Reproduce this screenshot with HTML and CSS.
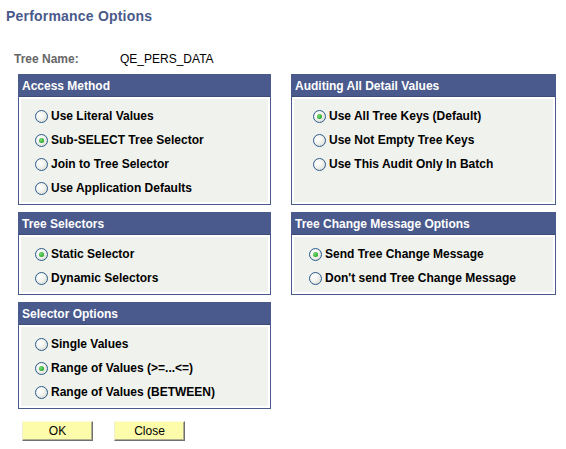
FILE: index.html
```html
<!DOCTYPE html>
<html>
<head>
<meta charset="utf-8">
<link rel="stylesheet" href="styles.css">
</head>
<body>
<div class="page">
  <h1 class="title">Performance Options</h1>
  <div class="treename"><span class="tn-label">Tree Name:</span><span class="tn-value">QE_PERS_DATA</span></div>
  <div class="grid">
    <div class="box">
      <div class="box-head">Access Method</div>
      <div class="box-body"><div class="box-inner ind-left">
        <div class="opt"><span class="radio"></span>Use Literal Values</div>
        <div class="opt"><span class="radio on"></span>Sub-SELECT Tree Selector</div>
        <div class="opt"><span class="radio"></span>Join to Tree Selector</div>
        <div class="opt"><span class="radio"></span>Use Application Defaults</div>
      </div></div>
    </div>
    <div class="box">
      <div class="box-head">Auditing All Detail Values</div>
      <div class="box-body"><div class="box-inner ind-audit">
        <div class="opt"><span class="radio on"></span>Use All Tree Keys (Default)</div>
        <div class="opt"><span class="radio"></span>Use Not Empty Tree Keys</div>
        <div class="opt"><span class="radio"></span>Use This Audit Only In Batch</div>
      </div></div>
    </div>
    <div class="box">
      <div class="box-head">Tree Selectors</div>
      <div class="box-body"><div class="box-inner ind-left">
        <div class="opt"><span class="radio on"></span>Static Selector</div>
        <div class="opt"><span class="radio"></span>Dynamic Selectors</div>
      </div></div>
    </div>
    <div class="box">
      <div class="box-head">Tree Change Message Options</div>
      <div class="box-body"><div class="box-inner ind-msg">
        <div class="opt"><span class="radio on"></span>Send Tree Change Message</div>
        <div class="opt"><span class="radio"></span>Don't send Tree Change Message</div>
      </div></div>
    </div>
    <div class="box">
      <div class="box-head">Selector Options</div>
      <div class="box-body"><div class="box-inner ind-left">
        <div class="opt"><span class="radio"></span>Single Values</div>
        <div class="opt"><span class="radio on"></span>Range of Values (&gt;=...&lt;=)</div>
        <div class="opt"><span class="radio"></span>Range of Values (BETWEEN)</div>
      </div></div>
    </div>
  </div>
  <div class="buttons">
    <button class="btn">OK</button>
    <button class="btn">Close</button>
  </div>
</div>
</body>
</html>
```
FILE: styles.css
```css
html, body {
  margin: 0;
  padding: 0;
  background: #ffffff;
}
body {
  font-family: "Liberation Sans", Arial, sans-serif;
  color: #000;
}
.page {
  padding-top: 8px;
}
.title {
  margin: 0 0 0 6px;
  font-size: 14px;
  line-height: 17px;
  font-weight: bold;
  color: #4a5a8c;
  letter-spacing: 0.2px;
}
.treename {
  margin-top: 27px;
  padding-left: 14px;
  height: 14px;
  line-height: 15px;
  font-size: 12px;
  display: flex;
}
.tn-label {
  width: 106px;
  font-weight: bold;
  color: #666666;
}
.tn-value {
  color: #000;
}
.grid {
  margin: 8px 0 0 18px;
  display: grid;
  grid-template-columns: 253px 265px;
  column-gap: 20px;
  row-gap: 7px;
  align-items: stretch;
}
.box {
  border: 1px solid #4a5a8a;
  display: flex;
  flex-direction: column;
}
.box-head {
  height: 20px;
  padding-top: 1px;
  line-height: 21px;
  background: #4a5a8c;
  border-bottom: 1px solid #3e4c7c;
  color: #ffffff;
  font-weight: bold;
  font-size: 12px;
  padding-left: 3px;
}
.box-body {
  flex: 1;
  padding: 2px;
  background: #ffffff;
  display: flex;
}
.box-inner {
  flex: 1;
  background: #f0f2ed;
  padding-top: 5px;
  padding-bottom: 2px;
}
.ind-left { padding-left: 14px; }
.ind-audit { padding-left: 19px; }
.ind-msg { padding-left: 15px; }
.opt {
  height: 24px;
  display: flex;
  align-items: center;
  font-size: 12px;
  font-weight: bold;
  white-space: nowrap;
}
.radio {
  width: 11px;
  height: 11px;
  border: 1px solid #2a5b8c;
  border-radius: 50%;
  background: radial-gradient(circle at 35% 35%, #ffffff 0%, #f4f4f0 40%, #d4d4cc 100%);
  margin-right: 3px;
  flex: none;
  position: relative;
}
.radio.on::after {
  content: "";
  position: absolute;
  left: 3px;
  top: 3px;
  width: 5px;
  height: 5px;
  border-radius: 50%;
  background: radial-gradient(circle at 40% 40%, #7fe07f 0%, #2fae2f 60%, #1a8a1a 100%);
}
.buttons {
  margin: 12px 0 0 22px;
  display: flex;
  gap: 21px;
}
.btn {
  width: 71px;
  height: 20px;
  padding: 0;
  background: #fcfcaa;
  border: 1px solid;
  border-color: #ffffe0 #707070 #707070 #f0f0d0;
  box-shadow: inset -1px -1px 0 #b0b090;
  font-family: "Liberation Sans", Arial, sans-serif;
  font-size: 12px;
  color: #000;
}
```
